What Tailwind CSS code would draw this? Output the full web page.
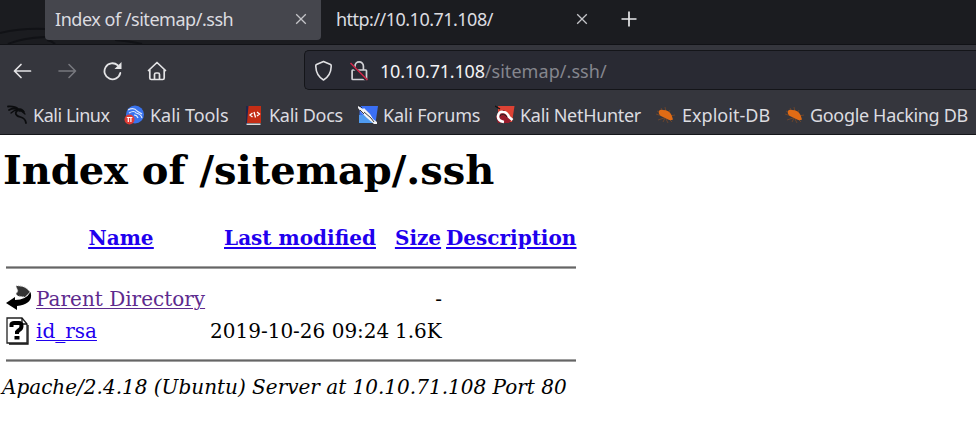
<!DOCTYPE html>
<html lang="en">
<head>
<meta charset="utf-8">
<title>Index of /sitemap/.ssh</title>
<script src="https://cdn.jsdelivr.net/npm/@tailwindcss/browser@4"></script>
</head>
<body class="w-[976px] h-[427px] overflow-hidden bg-white font-['Noto_Sans',sans-serif] text-[18px] leading-6 whitespace-nowrap">
<svg class="hidden">
  <symbol id="close" viewBox="0 0 12 12"><path d="M1.2 1.2l9.6 9.6M10.8 1.2L1.2 10.8" fill="none" stroke="#c4c4c8" stroke-width="1.3"/></symbol>
  <symbol id="bug" viewBox="0 0 20 16"><path d="M0 7l6 2M2 13l6-2M5 1l3 5M9 0l1 5M14 3l-2 4M19 8l-5 1M12 16l-2-4M7 15l2-4M1 4l6 3M16 15l-4-4" stroke="#96501f" stroke-width="1" opacity=".55"/><path d="M3 4Q4 2 7 3Q13 3 15.500 8L17 12.500Q14 14 11 12L5 9Q2 7 3 4Z" fill="#e06b15"/></symbol>
</svg>

<!-- tab strip -->
<div class="relative h-[45px] bg-[#1b1c20] border-b border-[#111216] flex items-start pl-[45px] text-[#dcdce0]">
  <svg class="absolute left-0 top-0" width="180" height="44" fill="none" stroke="#111216"><path d="M0 33Q22 28 45 29M8 44Q22 38 45 37" stroke-width="2"/><path d="M47 40Q52 41 55 44M115 40Q130 41 142 44" stroke-width="2"/></svg>
  <div class="relative w-[276px] h-[40px] bg-[#45464d] rounded-b-[4px] flex items-center pl-[10px] pr-[14px] pb-[2px] justify-between">
    <span class="tracking-[-0.47px]">Index of /sitemap/.ssh</span>
    <svg width="12" height="12"><use href="#close"/></svg>
  </div>
  <div class="w-[282px] h-[40px] flex items-center pl-[15px] pr-[15px] pb-[2px] justify-between">
    <span class="tracking-[-0.52px]">http://10.10.71.108/</span>
    <svg width="12" height="12"><use href="#close"/></svg>
  </div>
  <svg class="ml-[18px] mt-[11px]" width="16" height="16"><path d="M8 .5v15M.5 8h15" stroke="#e8e8ea" stroke-width="1.7"/></svg>
</div>

<!-- navigation toolbar -->
<div class="h-[50px] bg-[#35363d] flex items-start pt-[5px]">
  <div class="flex h-[40px] w-[304px] items-center pl-[13px] pt-[2px] gap-[26px]">
    <svg width="19" height="18" fill="none" stroke="#e4e4e6" stroke-width="1.7" stroke-linecap="round" stroke-linejoin="round"><path d="M17.500 9H1.500M8 2.500L1.500 9l6.500 6.500"/></svg>
    <svg width="19" height="18" fill="none" stroke="#77787e" stroke-width="1.6" stroke-linecap="round" stroke-linejoin="round"><path d="M1 9h16.500M11 2.500l6.500 6.500-6.500 6.500"/></svg>
    <svg width="19" height="20" fill="none" stroke="#e4e4e6" stroke-width="1.8" stroke-linecap="round"><path d="M14.700 4.200A8 8 0 1 0 17.300 12"/><path d="M18.500 1v7h-7z" fill="#e4e4e6" stroke="none"/></svg>
    <svg class="-ml-[1px]" width="20" height="20" fill="none" stroke="#e4e4e6" stroke-width="1.7" stroke-linecap="round" stroke-linejoin="round"><path d="M1.500 9.500L10 1.500l8.500 8M2.800 8.500V17q0 1.500 1.500 1.500h11.400q1.500 0 1.500-1.500V8.500M7.500 18.500v-5q0-1.500 1.500-1.500h2q1.500 0 1.500 1.500v5"/></svg>
  </div>
  <div class="h-[40px] flex-1 rounded-l-[5px] bg-[#292a33] border border-r-0 border-[#141519] flex items-center pl-[9px] pt-[2px]">
    <svg class="-mt-[1px]" width="20" height="22" fill="none" stroke="#e0e0e3" stroke-width="1.6" stroke-linejoin="round"><path d="M9.500 1.500L16.500 4.500Q17.500 5 17.200 6.500C17 12 14.500 17 9.500 20C4.500 17 2 12 1.800 6.500Q1.500 5 2.500 4.500Z"/></svg>
    <svg class="ml-[16px] -mt-[1px]" width="20" height="22" fill="none"><path d="M5 10V6a4.200 4.200 0 0 1 8.400 0V10M2.800 10h13q.7 0 .7.700v8.100q0 .7-.7.700h-13q-.7 0-.7-.7v-8.100q0-.7.7-.7z" stroke="#d2d2d6" stroke-width="1.700"/><path d="M1 4.500l15.500 15.500" stroke="#292a33" stroke-width="3"/><path d="M.5 3l17 17" stroke="#d5264a" stroke-width="1.500"/></svg>
    <span class="ml-[10px] text-[#f2f2f4] tracking-[-0.2px]">10.10.71.108</span><span class="text-[#85868e] tracking-[0.05px]">/sitemap/.ssh/</span>
  </div>
</div>

<!-- bookmarks toolbar -->
<div class="h-[40px] bg-[#35363d] border-b border-[#15161a] flex items-center pl-[7px] pt-px text-[#dcdce0] tracking-[-0.3px]">
  <div class="w-[117px] flex items-center"><svg width="22" height="20" fill="none" stroke="#0b0c0e" stroke-linecap="round"><path d="M1 1.500Q8 1 11 4Q15 4 17 7M2 5Q7 2 11 5Q7 8 10 10.500C13 13 18 11 19 18" stroke-width="1.800"/><path d="M4 8Q8 4 13 5L18 9M12 6l4 0" stroke-width="1.300"/></svg><span class="ml-[4px] tracking-[-0.45px]">Kali Linux</span></div>
  <div class="w-[121px] flex items-center"><svg width="21" height="20"><circle cx="11" cy="9.500" r="9" fill="#3973ee"/><path d="M4 5q6-3 9 1l5 3M5 8q5-3 7 0q5 1 6 5M10 10q3 0 4 3" fill="none" stroke="#dce8ff" stroke-width="1.200"/><circle cx="5.500" cy="14.500" r="5" fill="#df3b34"/><path d="M2.800 12.500h5.600M4.300 12.500v4.500M6.900 12.500v4.500" stroke="#fff" stroke-width="1.200"/></svg><span class="ml-[5px] tracking-[-0.05px]">Kali Tools</span></div>
  <div class="w-[113px] flex items-center"><svg width="18" height="21"><path d="M1 1h3v19H1z" fill="#20264c"/><path d="M3.500 1H16v17H2z" fill="#c42d15"/><path d="M1.500 18.500h14v1.500h-14z" fill="#ddd"/><path d="M7.500 8L5 10l2.500 2M12 7l2.500 2-2.500 2M9 7l1.500 5.500" fill="none" stroke="#fff" stroke-width="1.300"/></svg><span class="ml-[6px]">Kali Docs</span></div>
  <div class="w-[137px] flex items-center"><svg width="21" height="20"><path d="M2 1h18l-2.500 17H1z" fill="#3a6ff5"/><path d="M1 10l6 0 8 8H1z" fill="#4f9bf0"/><path d="M0 1l5 3 1-1 6 6 3 5 4 3v2h-3l-7-6-5-5L0 3z" fill="#f1f2f4"/><path d="M1 0l3 3M6 7l7 6 3 4M2 5l4 4" stroke="#24282e" stroke-width=".9" fill="none"/></svg><span class="ml-[4px] tracking-[-0.2px]">Kali Forums</span></div>
  <div class="w-[161px] flex items-center"><svg width="20" height="20"><path d="M3 1h16.500l-2.500 16H3z" fill="#dc4234"/><path d="M1 12l3-6 5-1 8 9-3 4H3z" fill="#971b2b"/><path d="M0 1l5 3" stroke="#111" stroke-width="1.200"/><path d="M9 17Q2.500 16 3 11Q4 6 8 7Q12 7 14 12L17.500 15" fill="none" stroke="#fff" stroke-width="2.600"/><path d="M5 11Q8 7 12 12" fill="none" stroke="#222" stroke-width="1"/></svg><span class="ml-[5px]">Kali NetHunter</span></div>
  <div class="w-[129px] flex items-center"><svg width="20" height="16"><use href="#bug"/></svg><span class="ml-[6px] tracking-[0.02px]">Exploit-DB</span></div>
  <div class="flex items-center"><svg width="20" height="16"><use href="#bug"/></svg><span class="ml-[5px] tracking-[-0.33px]">Google Hacking DB</span></div>
</div>

<!-- directory listing -->
<main class="font-['DejaVu_Serif',serif] text-[20px] text-black">
  <h1 class="h-[90px] pt-[11px] pl-[3px] text-[40px] leading-[48px] font-bold tracking-[-0.03px]">Index of /sitemap/.ssh</h1>
  <div class="ml-[6px] w-[570px]">
    <div class="grid grid-cols-[31px_168px_5px_180px_4px_48px_4px_130px] h-[41px] pt-px font-bold text-[#1f00ee] text-center underline decoration-[1.5px] underline-offset-2">
      <span></span><a>Name</a><span></span><a>Last modified</a><span></span><a>Size</a><span></span><a>Description</a>
    </div>
    <hr class="border-0 h-[3px] bg-[#656565] border-y border-[#a0a0a0]">
    <div class="grid grid-cols-[30px_168px_6px_180px_5px_47px] h-[32px] mt-[14px] items-center">
      <svg class="-mt-[2px]" width="26" height="26"><path d="M10 1q9-1 14 6l-5 5-7-1-2-2 2-3z" fill="#333" stroke="#aaa" stroke-dasharray="1 1"/><path d="M24.500 7Q28 19 11 21v4L0 18l9-6v3Q20 15 24.500 7z" fill="#000"/></svg>
      <a class="text-[#5d2a8e] underline decoration-1 underline-offset-2">Parent Directory</a><span></span><span></span><span></span><span class="text-right">-</span>
    </div>
    <div class="grid grid-cols-[30px_168px_6px_180px_5px_47px] h-[32px] items-center">
      <svg class="-mt-px" width="24" height="28"><path d="M1 1h15l5 6v19H1z" fill="#fff" stroke="#222" stroke-width="1.300"/><path d="M16 1v6h5M3 27h19V8" fill="none" stroke="#111" stroke-width="1.300"/><path d="M5.500 10V7.500Q6 6 8 6h5Q15.500 6 15.500 9q0 3-3 4.500l-1.500 1.500v2" fill="none" stroke="#000" stroke-width="4"/><path d="M8.500 19h5v3.500h-5z"/></svg>
      <a class="text-[#1f00ee] underline decoration-1 underline-offset-2">id_rsa</a><span></span><span>2019-10-26 09:24</span><span></span><span>1.6K</span>
    </div>
    <hr class="border-0 h-[3px] mt-[12px] bg-[#656565] border-y border-[#a0a0a0]">
  </div>
  <address class="ml-[2px] mt-[13px] italic leading-[24px]">Apache/2.4.18 (Ubuntu) Server at 10.10.71.108 Port 80</address>
</main>
</body>
</html>
